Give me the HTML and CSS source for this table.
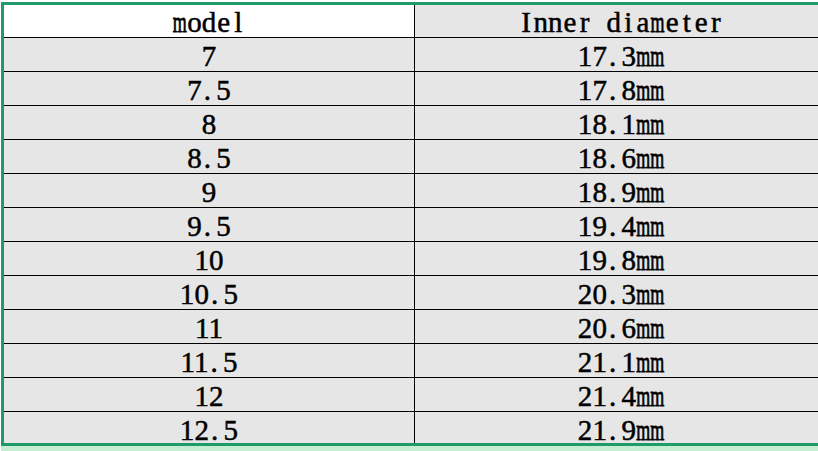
FILE: index.html
```html
<!DOCTYPE html>
<html>
<head>
<meta charset="utf-8">
<link rel="stylesheet" href="styles.css">
</head>
<body>
<div class="sheet">
  <div class="row head">
    <div class="cell c1 white"><span class="ch m">m</span><span class="ch">o</span><span class="ch">d</span><span class="ch">e</span><span class="ch">l</span></div>
    <div class="cell c2"><span class="ch">I</span><span class="ch">n</span><span class="ch">n</span><span class="ch">e</span><span class="ch">r</span><span class="ch"> </span><span class="ch">d</span><span class="ch">i</span><span class="ch">a</span><span class="ch m">m</span><span class="ch">e</span><span class="ch">t</span><span class="ch">e</span><span class="ch">r</span></div>
  </div>
  <div class="row"><div class="cell c1">7</div><div class="cell c2">17<span class="dot">.</span>3<span class="mm">mm</span></div></div>
  <div class="row"><div class="cell c1">7<span class="dot">.</span>5</div><div class="cell c2">17<span class="dot">.</span>8<span class="mm">mm</span></div></div>
  <div class="row"><div class="cell c1">8</div><div class="cell c2">18<span class="dot">.</span>1<span class="mm">mm</span></div></div>
  <div class="row"><div class="cell c1">8<span class="dot">.</span>5</div><div class="cell c2">18<span class="dot">.</span>6<span class="mm">mm</span></div></div>
  <div class="row"><div class="cell c1">9</div><div class="cell c2">18<span class="dot">.</span>9<span class="mm">mm</span></div></div>
  <div class="row"><div class="cell c1">9<span class="dot">.</span>5</div><div class="cell c2">19<span class="dot">.</span>4<span class="mm">mm</span></div></div>
  <div class="row"><div class="cell c1">10</div><div class="cell c2">19<span class="dot">.</span>8<span class="mm">mm</span></div></div>
  <div class="row"><div class="cell c1">10<span class="dot">.</span>5</div><div class="cell c2">20<span class="dot">.</span>3<span class="mm">mm</span></div></div>
  <div class="row"><div class="cell c1">11</div><div class="cell c2">20<span class="dot">.</span>6<span class="mm">mm</span></div></div>
  <div class="row"><div class="cell c1">11<span class="dot">.</span>5</div><div class="cell c2">21<span class="dot">.</span>1<span class="mm">mm</span></div></div>
  <div class="row"><div class="cell c1">12</div><div class="cell c2">21<span class="dot">.</span>4<span class="mm">mm</span></div></div>
  <div class="row last"><div class="cell c1">12<span class="dot">.</span>5</div><div class="cell c2">21<span class="dot">.</span>9<span class="mm">mm</span></div></div>
</div>
<div class="below"></div>
</body>
</html>
```
FILE: styles.css
```css
html, body {
  margin: 0;
  padding: 0;
  background: #ffffff;
  width: 818px;
  height: 451px;
  overflow: hidden;
}
.sheet {
  margin: 2px 0 0 1px;
  width: 830px;
  border-top: 3px solid #1f9b6b;
  border-left: 3px solid #1f9b6b;
  border-bottom: 3px solid #1f9b6b;
  font-family: "Liberation Serif", serif;
  font-size: 29px;
  color: #000000;
  -webkit-text-stroke: 0.5px #000000;
}
.row {
  display: flex;
  height: 33px;
  line-height: 33px;
  border-bottom: 1px solid #000000;
}
.row.head {
  height: 32px;
}
.row.last {
  height: 31px;
  border-bottom: none;
}
.cell {
  background: #e6e6e6;
  text-align: center;
  white-space: pre;
  padding-top: 2px;
  box-sizing: border-box;
  height: 100%;
  letter-spacing: 0.1px;
}
.head .cell {
  padding-top: 1px;
  letter-spacing: 0;
}
.c1 {
  width: 411px;
  border-right: 1px solid #000000;
}
.c2 {
  width: 412px;
}
.white {
  background: #ffffff;
}
.ch {
  display: inline-block;
  width: 14.6px;
  text-align: center;
}
.ch.m {
  font-size: 18px;
  line-height: 33px;
  transform: scaleY(1.61);
  transform-origin: center 22.6px;
}
.dot {
  display: inline-block;
  width: 12.5px;
  padding-left: 2px;
  text-align: left;
}
.mm {
  display: inline-block;
  font-size: 18px;
  line-height: 33px;
  letter-spacing: 0;
  transform: scaleY(1.61);
  transform-origin: center 22.6px;
}
.below {
  margin-left: 1px;
  height: 5px;
  background: #c5edd2;
}
```
